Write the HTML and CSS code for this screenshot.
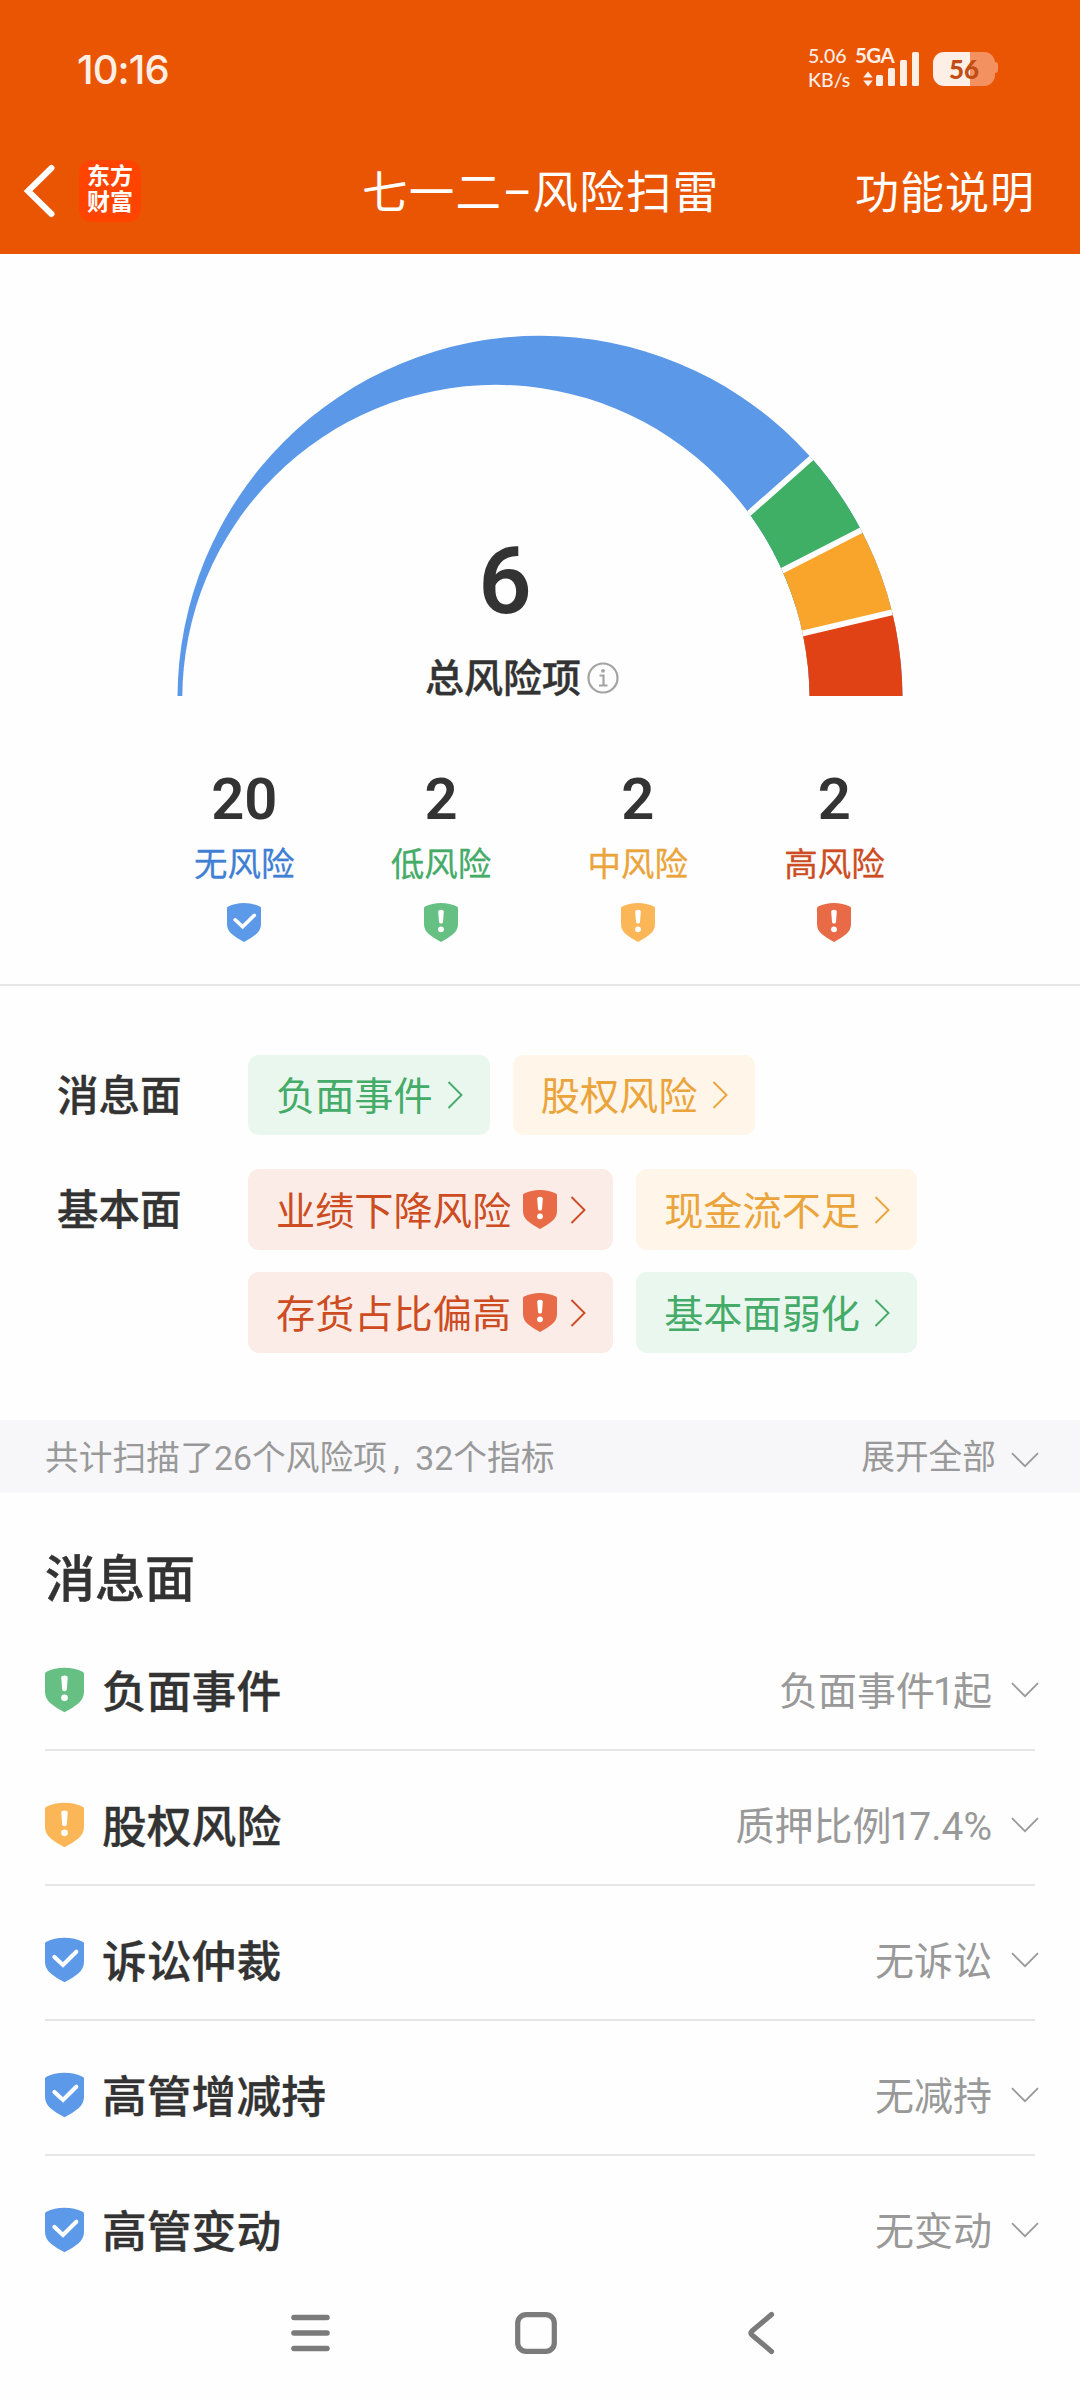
FILE: index.html
```html
<!DOCTYPE html>
<html lang="zh-CN">
<head>
<meta charset="utf-8">
<title>七一二-风险扫雷</title>
<link rel="stylesheet" href="styles.css">
</head>
<body>
<svg class="defs" aria-hidden="true">
  <symbol id="alert" viewBox="0 0 34 39">
    <path fill="currentColor" d="M0 5.2Q0 4 1.2 3.6Q8 0 17 0T32.800 3.600Q34 4 34 5.200V21Q34 27 29 31.300Q24 35.500 17 39Q10 35.500 5 31.300Q0 27 0 21Z"/>
    <path fill="#fff" d="M14.200 8.500Q14.300 6.800 17 6.800T19.800 8.500L19 19Q18.800 20.500 17 20.500T15 19Z"/>
    <circle cx="17" cy="26.300" r="2.900" fill="#fff"/>
  </symbol>
  <symbol id="check" viewBox="0 0 34 39">
    <path fill="currentColor" d="M0 5.2Q0 4 1.2 3.6Q8 0 17 0T32.800 3.600Q34 4 34 5.200V21Q34 27 29 31.300Q24 35.500 17 39Q10 35.500 5 31.300Q0 27 0 21Z"/>
    <path fill="none" stroke="#fff" stroke-width="3.600" stroke-linecap="round" d="M8.200 16.800L15.700 23.800L27.300 12.300"/>
  </symbol>
  <symbol id="right" viewBox="0 0 16 28"><path fill="none" stroke="currentColor" stroke-width="1.900" d="M1.500 1L14.500 14L1.500 27"/></symbol>
  <symbol id="down" viewBox="0 0 28 16"><path fill="none" stroke="#999" stroke-width="1.800" d="M1 1.200L14 14.200L27 1.200"/></symbol>
</svg>

<header class="top">
  <div class="status">
    <span class="time">10:16</span>
    <span class="speed">5.06<br>KB/s</span>
    <span class="signal">
      <b>5GA</b>
      <svg width="57" height="37" viewBox="0 0 57 37" fill="#fdeee6">
        <path d="M5 21.500L9.800 27.500H.2ZM5 36.500L.2 30.500H9.800Z"/>
        <rect x="13" y="25" width="7" height="11" rx="1.500"/><rect x="25" y="18" width="7" height="18" rx="1.500"/><rect x="37" y="10" width="7" height="26" rx="1.500"/><rect x="49" y="2" width="7" height="34" rx="1.500"/>
      </svg>
    </span>
    <span class="battery"><span>56</span></span>
  </div>
  <nav class="titlebar">
    <svg class="back" width="32" height="54" viewBox="0 0 32 54"><path fill="none" stroke="#fff" stroke-width="6" stroke-linecap="round" d="M28.500 4L5 27L28.500 50"/></svg>
    <span class="logo">东方<br>财富</span>
    <h1>七一二<i>–</i>风险扫雷</h1>
    <a class="help">功能说明</a>
  </nav>
</header>

<section class="summary">
  <div class="gauge">
    <svg width="726" height="362" viewBox="177 334 726 362">
      <clipPath id="ring"><path clip-rule="evenodd" d="M177.500 698.300A362.500 362.500 0 0 1 902.500 698.300ZM182.300 698.300A313.600 313.600 0 0 1 809.500 698.300Z"/></clipPath>
      <g clip-path="url(#ring)">
        <path fill="#5b98e8" d="M170 330H920V696H170Z"/>
        <path fill="#3eaf64" d="M873 403.300L687 568.300L782 620L920 480Z"/>
        <path fill="#f9a42b" d="M940 489.900L703 611.100V700L940 620Z"/>
        <path fill="#e04215" d="M981.600 591.300L714 654.300V720H960Z"/>
        <path stroke="#fefefe" stroke-width="5.800" d="M842 430.800L718 540.800M900.500 510.100L742.500 590.900M937 601.800L758.600 643.800"/>
      </g>
    </svg>
    <div class="total">
      <strong>6</strong>
      <p>总风险项<svg width="32" height="32" viewBox="0 0 32 32" fill="none" stroke="#a3a3a3" stroke-width="2.200"><circle cx="16" cy="16" r="14.500"/><path d="M12.500 13.500H16.500V23.500M12 23.500H20.500"/><circle cx="16" cy="8.800" r="1.900" fill="#a3a3a3" stroke="none"/></svg></p>
    </div>
  </div>
  <ul class="levels">
    <li class="safe"><b>20</b><span>无风险</span><svg><use href="#check"/></svg></li>
    <li class="low"><b>2</b><span>低风险</span><svg><use href="#alert"/></svg></li>
    <li class="mid"><b>2</b><span>中风险</span><svg><use href="#alert"/></svg></li>
    <li class="high"><b>2</b><span>高风险</span><svg><use href="#alert"/></svg></li>
  </ul>
</section>

<section class="tags">
  <div class="group">
    <h2>消息面</h2>
    <div class="chips">
      <a class="chip low"><span>负面事件</span><svg class="go"><use href="#right"/></svg></a>
      <a class="chip mid"><span>股权风险</span><svg class="go"><use href="#right"/></svg></a>
    </div>
  </div>
  <div class="group">
    <h2>基本面</h2>
    <div class="chips">
      <a class="chip high"><span>业绩下降风险</span><svg class="mark"><use href="#alert"/></svg><svg class="go"><use href="#right"/></svg></a>
      <a class="chip mid"><span>现金流不足</span><svg class="go"><use href="#right"/></svg></a>
      <a class="chip high"><span>存货占比偏高</span><svg class="mark"><use href="#alert"/></svg><svg class="go"><use href="#right"/></svg></a>
      <a class="chip low"><span>基本面弱化</span><svg class="go"><use href="#right"/></svg></a>
    </div>
  </div>
</section>

<div class="scanbar"><span>共计扫描了26个风险项<i>,</i>32个指标</span><span class="expand"><span>展开全部</span><svg class="fold"><use href="#down"/></svg></span></div>

<section class="list">
  <h2>消息面</h2>
  <div class="row low"><svg class="shield"><use href="#alert"/></svg><h3>负面事件</h3><span>负面事件<i>1</i>起</span><svg class="fold"><use href="#down"/></svg></div>
  <div class="row mid"><svg class="shield"><use href="#alert"/></svg><h3>股权风险</h3><span>质押比例<i>1</i>7.4%</span><svg class="fold"><use href="#down"/></svg></div>
  <div class="row safe"><svg class="shield"><use href="#check"/></svg><h3>诉讼仲裁</h3><span>无诉讼</span><svg class="fold"><use href="#down"/></svg></div>
  <div class="row safe"><svg class="shield"><use href="#check"/></svg><h3>高管增减持</h3><span>无减持</span><svg class="fold"><use href="#down"/></svg></div>
  <div class="row safe"><svg class="shield"><use href="#check"/></svg><h3>高管变动</h3><span>无变动</span><svg class="fold"><use href="#down"/></svg></div>
</section>

<footer class="sysnav">
  <svg width="42" height="44" viewBox="0 0 42 44" stroke="#7b7b7b" stroke-width="5.600" stroke-linecap="round"><path d="M4 6.500H37M4 22H37M4 37.500H37"/></svg>
  <svg width="44" height="44" viewBox="0 0 44 44" fill="none" stroke="#7b7b7b" stroke-width="5.200"><rect x="3.700" y="3.600" width="36.600" height="36.800" rx="8.500"/></svg>
  <svg width="30" height="44" viewBox="0 0 30 44" fill="none" stroke="#7b7b7b" stroke-width="5.200" stroke-linecap="round" stroke-linejoin="round"><path d="M25.500 3.500L6 20Q4 22 6 24L25.500 40.500"/></svg>
</footer>
</body>
</html>
```
FILE: styles.css
```css
* { box-sizing: border-box; margin: 0; padding: 0; }

body {
  width: 1080px;
  height: 2400px;
  overflow: hidden;
  display: flex;
  flex-direction: column;
  background: #fefefe;
  color: #333;
  font-family: Roboto, "Noto Sans CJK SC", sans-serif;
}

svg { display: block; flex: none; }
i { font-style: normal; }
.defs { position: absolute; width: 0; height: 0; }

.top { height: 254px; background: #ea5504; color: #fff; }

.status {
  height: 128px;
  padding: 12px 82px 0 77px;
  display: flex;
  align-items: center;
  color: #fdeee6;
}
.time { flex: 1; font: 500 40px/48px Inter, sans-serif; letter-spacing: -.9px; }
.speed { width: 47px; margin-top: -4px; font: 500 19.500px/24px Lato, sans-serif; }
.signal { width: 64px; height: 40px; display: flex; flex-direction: column; position: relative; }
.signal b { margin-top: -6px; font: 700 20.500px/22px Lato, sans-serif; letter-spacing: -.6px; }
.signal svg { position: absolute; left: 8px; top: 0; }
.battery {
  width: 62px;
  height: 34px;
  margin: -2px 3px 0 14px;
  border-radius: 11px;
  position: relative;
  background: linear-gradient(90deg, #fdeee6 60%, #f39160 60%);
  color: #c24d14;
  text-align: center;
  font: 900 26px/34px Lato, sans-serif;
}
.battery::after {
  content: "";
  position: absolute;
  left: 62px;
  top: 10px;
  width: 3px;
  height: 11px;
  border-radius: 0 4px 4px 0;
  background: #f39160;
}

.titlebar { height: 126px; display: flex; align-items: center; padding: 0 45px 0 23px; }
.logo {
  width: 62px;
  height: 62px;
  margin-left: 24px;
  padding-top: 4px;
  border-radius: 13px;
  background: #ff4400;
  text-align: center;
  font-size: 23px;
  line-height: 26px;
  font-weight: 700;
}
.titlebar h1 { flex: 1; margin-left: 221px; padding-top: 5px; font-size: 45.500px; line-height: 60px; font-weight: 400; letter-spacing: 1.300px; }
.titlebar h1 i { display: inline-block; width: 30px; text-align: center; }
.help { padding-top: 5px; font-size: 44px; line-height: 60px; letter-spacing: 1px; }

.summary { height: 732px; border-bottom: 2px solid #e6e6e6; }
.gauge { height: 442px; padding: 80px 0 0 177px; display: grid; }
.gauge > * { grid-area: 1 / 1; }
.total { padding: 198px 0 0 248px; }
.total strong { display: block; width: 160px; text-align: center; font-size: 93px; line-height: 100px; font-weight: 600; }
.total p { display: flex; align-items: center; gap: 6px; height: 50px; margin-top: 18px; font-size: 39px; font-weight: 500; -webkit-text-stroke: .4px; }
.total svg { margin-top: 5px; }

.levels { list-style: none; display: grid; grid-template-columns: repeat(4, 196.7px); padding: 68px 0 0 146px; }
.levels li { display: flex; flex-direction: column; align-items: center; }
.levels b { color: #333; font: 600 58px/70px Roboto, sans-serif; }
.levels span { margin-top: 9px; font-size: 33.500px; line-height: 44px; -webkit-text-stroke: .3px; }
.levels svg { margin-top: 16px; width: 34px; height: 39px; }

.safe span { color: #3f7fd4; }
.low span, .chip.low { color: #45ab68; }
.mid span, .chip.mid { color: #eba43b; }
.high span, .chip.high { color: #cd4c22; }
.safe svg { color: #5c99e9; }
.levels .low svg, .row.low svg { color: #66c084; }
.levels .mid svg, .row.mid svg { color: #fbb757; }
.levels .high svg, .mark { color: #e96a47; }

.tags { height: 434px; padding: 69px 57px 0; display: flex; flex-direction: column; gap: 34px; }
.group { display: flex; }
.group h2 { width: 191px; padding-top: 2px; font-size: 41.500px; line-height: 80px; font-weight: 500; -webkit-text-stroke: .4px; }
.chips { flex: 1; display: flex; flex-wrap: wrap; gap: 22px 23px; }
.chip { height: 81px; padding: 0 27px 0 28px; border-radius: 11px; display: flex; align-items: center; font-size: 39.200px; }
.chip span { margin-top: -4px; }
.group:first-child { height: 80px; }
.group:first-child .chip { height: 80px; }
.chip.low { background: #eaf7ee; }
.chip.mid { background: #fff5e8; }
.chip.high { background: #fbece8; }
.go { width: 16px; height: 28px; margin-left: 14px; }
.mark { width: 34px; height: 39px; margin-left: 12px; }
.mark + .go { margin-left: 13px; }

.scanbar {
  height: 73px;
  padding: 0 41px 0 45px;
  display: flex;
  align-items: center;
  justify-content: space-between;
  background: #f7f7f9;
  color: #999;
  font-size: 33.700px;
}
.scanbar > span, .expand span { margin-top: -2px; }
.scanbar i { display: inline-block; width: 28px; padding-left: 6px; }
.scanbar > span:first-child { letter-spacing: .1px; }
.expand { display: flex; align-items: center; }
.fold { width: 28px; height: 16px; margin-left: 15px; }
.expand .fold { margin-top: 8px; }

.list { padding: 0 45px; }
.list h2 { height: 123px; padding-top: 52px; font-size: 50px; line-height: 70px; font-weight: 500; -webkit-text-stroke: .5px; }
.row { height: 135px; padding-top: 15px; display: flex; align-items: center; border-bottom: 2px solid #e6e6e6; }
.row:last-child { border: 0; padding-top: 13px; }
.row .shield { width: 39px; height: 46px; }
.row h3 { flex: 1; margin: -3px 0 0 18px; font-size: 44.800px; font-weight: 500; -webkit-text-stroke: .3px; }
.row span { margin-top: -4px; color: #999; font-size: 39px; }
.row span i { margin: 0 -2px; }
.row .fold { margin: 0 -4px 0 19px; }

.sysnav {
  position: absolute;
  left: 0;
  top: 2268px;
  width: 1080px;
  height: 132px;
  padding: 43px 304px 0 290px;
  display: flex;
  justify-content: space-between;
}
.sysnav svg:nth-child(2) { margin-left: -7px; }
```
